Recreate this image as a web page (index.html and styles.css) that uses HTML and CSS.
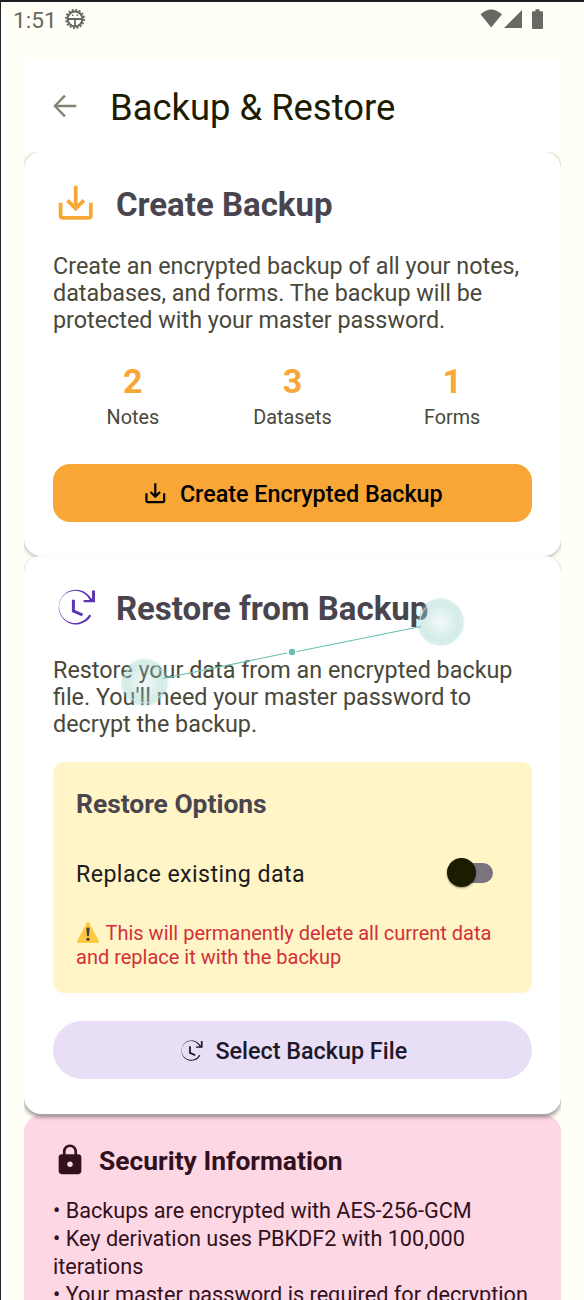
FILE: index.html
```html
<!DOCTYPE html>
<html lang="en">
<head>
<meta charset="utf-8">
<title>Backup &amp; Restore</title>
<link rel="stylesheet" href="styles.css">
</head>
<body>
<svg class="defs" width="0" height="0">
  <symbol id="download" viewBox="0 0 24 24"><path d="M19 12v7H5v-7H3v7c0 1.1.9 2 2 2h14c1.1 0 2-.9 2-2v-7h-2zm-6 .67l2.59-2.58L17 11.5l-5 5-5-5 1.41-1.41L11 12.67V3h2v9.67z"/></symbol>
  <symbol id="restore" viewBox="0 0 24 24"><path d="M20.6 3.5h1.6v6.2h-6V8.5h3.2A8.5 8.5 0 1 0 19.2 16.1l1 .7A9.2 9.2 0 1 1 20.2 7.7h.4zM10 8.3h1.6v5.4l4.4 2-.8 1.4L10 14.8z"/></symbol>
</svg>
<div class="phone">
  <div class="status">
    <span class="time">1:51</span>
    <svg class="bug" viewBox="0 0 22 22">
      <circle class="teeth" cx="11" cy="11" r="9.1"/>
      <circle class="rim" cx="11" cy="11" r="7.4"/>
      <path class="bars" d="M3.5 11h15M11 11v8"/>
      <path class="eyes" d="M8 7.2h1.4M12.6 7.2H14"/>
    </svg>
    <svg class="signals" viewBox="0 0 66 22">
      <path d="M0.5 6.2Q11 -3.4 22 6.2L11.2 19.5zM24 20 42 2v18zM53 3.2h2.5V1.3h4v1.9H62q1 0 1 1V20q0 1-1 1h-9q-1 0-1-1V4.2q0-1 1-1z"/>
    </svg>
  </div>
  <main class="screen">
    <header class="appbar">
      <svg class="back" viewBox="0 0 24 24"><path d="M23.3 10.7H4.6l8.2-8.1L11 .8.3 12 11 23.2l1.8-1.8-8.2-8.1h18.7z"/></svg>
      <h1 class="title">Backup &amp; Restore</h1>
    </header>
    <section class="card create">
      <div class="heading"><svg class="icon orange"><use href="#download"/></svg><h2 class="h2">Create Backup</h2></div>
      <p class="body">Create an encrypted backup of all your notes,<br>databases, and forms. The backup will be<br>protected with your master password.</p>
      <div class="stats">
        <div class="stat"><b class="num">2</b><span class="label">Notes</span></div>
        <div class="stat"><b class="num">3</b><span class="label">Datasets</span></div>
        <div class="stat"><b class="num">1</b><span class="label">Forms</span></div>
      </div>
      <div class="button primary"><svg class="small"><use href="#download"/></svg><span class="caption">Create Encrypted Backup</span></div>
    </section>
    <section class="card recover">
      <div class="heading"><svg class="icon purple"><use href="#restore"/></svg><h2 class="h2">Restore from Backup</h2></div>
      <p class="body">Restore your data from an encrypted backup<br>file. You'll need your master password to<br>decrypt the backup.</p>
      <div class="options">
        <h3 class="h3">Restore Options</h3>
        <div class="row"><span class="replace">Replace existing data</span><span class="track"><span class="thumb"></span></span></div>
        <p class="warn"><svg class="alert" viewBox="0 0 24 24"><path class="tri" d="M10.7 1.7q1.3-1.7 2.6 0L23.3 20.8q.6 2-1.3 2.2H2q-1.9-.2-1.3-2.2z"/><path class="mark" d="M10.3 8.4q0-1.5 1.7-1.5t1.7 1.5l-.8 7.6h-1.8z"/><circle class="mark" cx="12" cy="19.1" r="1.6"/></svg>This will permanently delete all current data<br>and replace it with the backup</p>
      </div>
      <div class="button tonal"><svg class="small"><use href="#restore"/></svg><span class="caption">Select Backup File</span></div>
    </section>
    <section class="card security">
      <div class="heading lockrow"><svg class="lock" viewBox="0 0 24 24"><path d="M18 8h-1V6c0-2.76-2.24-5-5-5S7 3.24 7 6v2H6c-1.1 0-2 .9-2 2v10c0 1.1.9 2 2 2h12c1.1 0 2-.9 2-2V10c0-1.1-.9-2-2-2zm-6 9c-1.1 0-2-.9-2-2s.9-2 2-2 2 .9 2 2-.9 2-2 2zm3.1-9H8.900V6c0-1.710 1.390-3.100 3.100-3.100s3.100 1.390 3.100 3.100v2z"/></svg><h3 class="h3">Security Information</h3></div>
      <p class="facts">• Backups are encrypted with AES-256-GCM<br>• Key derivation uses PBKDF2 with 100,000<br>iterations<br>• Your master password is required for decryption</p>
    </section>
  </main>
  <svg class="gesture" viewBox="0 0 584 1300">
    <defs><radialGradient id="glow"><stop offset="0" stop-color="#9bd3cb" stop-opacity=".12"/><stop offset=".78" stop-color="#9bd3cb" stop-opacity=".45"/><stop offset=".88" stop-color="#8ccdc4" stop-opacity=".42"/><stop offset="1" stop-color="#9bd5cd" stop-opacity=".05"/></radialGradient></defs>
    <circle class="halo" cx="144.5" cy="682.5" r="24.500"/><circle class="ring" cx="144.5" cy="682.5" r="20.5"/>
    <circle class="halo" cx="440.5" cy="622" r="24.500"/><circle class="ring" cx="440.5" cy="622" r="20.5"/>
    <path class="trace" d="M163 678.5 287 653M297 651.5 421 626.5"/>
    <circle class="dot" cx="292" cy="652" r="3.2"/>
  </svg>
</div>
</body>
</html>
```
FILE: styles.css
```css
* { box-sizing: border-box; }
body { margin: 0; font-family: Roboto, sans-serif; }
h1, h2, h3, p { margin: 0; }
.defs { position: absolute; }
.phone {
  position: relative;
  width: 584px;
  height: 1300px;
  overflow: hidden;
  background: #fffff7;
  border-top: 2px solid #1d1c22;
  border-left: 1px solid #25242c;
}
.status { display: flex; height: 58px; padding: 6px 38px 0 12px; }
.time { width: 51px; font-size: 22.7px; line-height: 26px; color: #666762; }
.bug { width: 22px; height: 22px; fill: none; stroke: #666762; }
.teeth { stroke-width: 1.8; stroke-dasharray: 2 1.57; }
.rim { stroke-width: 2; }
.bars { stroke-width: 1.8; }
.eyes { stroke-width: 1.4; }
.signals { width: 66px; height: 22px; margin-left: auto; fill: #686963; }

.screen { width: 537px; margin-left: 23px; height: 1240px; overflow: hidden; background: #fffff7; }
.appbar { position: relative; z-index: 1; display: flex; align-items: center; height: 92px; padding: 3px 0 0 29px; background: #fff; }
.back { width: 24px; height: 24px; margin: -3px 33px 0 0; fill: #838573; }
.title { font-size: 36.4px; font-weight: 400; line-height: 44px; color: #1d1c00; white-space: nowrap; }

.card { padding: 0 29px; border-radius: 17px; background: #fff; }
.create { height: 404px; padding-top: 28px; box-shadow: 0 1px 4px rgba(0, 0, 0, .35); }
.recover { height: 558px; padding-top: 28px; box-shadow: 0 3px 4px -.5px rgba(0, 0, 0, .4); }
.security { height: 240px; margin-top: 1px; padding-top: 27px; background: #fdd7e4; }
.create, .recover { position: relative; }
.heading { display: flex; align-items: center; height: 46px; }
.icon { width: 45.4px; height: 45.4px; margin-right: 17.5px; }
.orange { fill: #f8a737; }
.purple { fill: #5e35b1; }
.h2 { padding-top: 3px; font-size: 33px; font-weight: 700; line-height: 46px; color: #49454f; white-space: nowrap; }
.body { margin-top: 27px; font-size: 23.35px; line-height: 27px; color: #49483a; white-space: nowrap; }
.stats { display: grid; grid-template-columns: repeat(3, 1fr); height: 130px; padding-top: 27px; text-align: center; }
.stat { display: flex; flex-direction: column; }
.num { font-size: 34px; line-height: 40px; color: #f8a737; }
.label { margin-top: 5px; font-size: 19.8px; line-height: 24px; color: #49483a; }
.button { display: flex; align-items: center; justify-content: center; height: 58px; font-size: 23.35px; font-weight: 500; white-space: nowrap; }
.small { width: 26.6px; height: 26.6px; margin-right: 11px; }
.caption { padding-top: 1px; }
.primary { border-radius: 17px; background: #f8a737; color: #000; fill: #000; }
.tonal { margin-top: 28px; border-radius: 29px; background: #e8def6; color: #1d192b; fill: #1d192b; }
.options { height: 231px; margin-top: 24px; padding: 25px 23px 0; border-radius: 11px; background: #fff5c6; }
.h3 { font-size: 26.4px; line-height: 34px; font-weight: 700; color: #49454f; white-space: nowrap; }
.row { display: flex; align-items: center; justify-content: space-between; height: 40px; margin-top: 32px; }
.replace { padding-top: 1px; font-size: 23.2px; letter-spacing: .42px; color: #1c1b1f; }
.track { width: 44px; height: 20px; margin-right: 16px; border-radius: 10px; background: #7b7480; }
.thumb { display: block; width: 29px; height: 29px; margin: -5px 0 0 -2px; border-radius: 50%; background: #1d1c00; box-shadow: 0 1px 2px rgba(0, 0, 0, .45); }
.warn { margin-top: 28px; font-size: 20px; line-height: 23.5px; color: #d32f3a; white-space: nowrap; }
.alert { width: 24px; height: 23px; margin-right: 5.5px; vertical-align: -4px; }
.tri { fill: #fcc941; }
.mark { fill: #3b3f42; }
.lockrow { height: 38px; }
.lock { width: 34px; height: 34px; margin: -2px 12px 0 0; fill: #31111d; }
.security .h3 { color: #31111d; }
.facts { margin-top: 17px; font-size: 21.65px; line-height: 28px; color: #31111d; white-space: nowrap; }

/* Touch trace drawn over the screen */
.gesture { position: absolute; z-index: 2; left: -1px; top: -2px; width: 584px; height: 1300px; pointer-events: none; }
.halo { fill: url(#glow); }
.ring { fill: none; stroke: #e6f5f2; stroke-width: 1; stroke-opacity: .8; }
.trace { fill: none; stroke: #67bfb3; stroke-width: 1.1; }
.dot { fill: #67bfb3; }
```
